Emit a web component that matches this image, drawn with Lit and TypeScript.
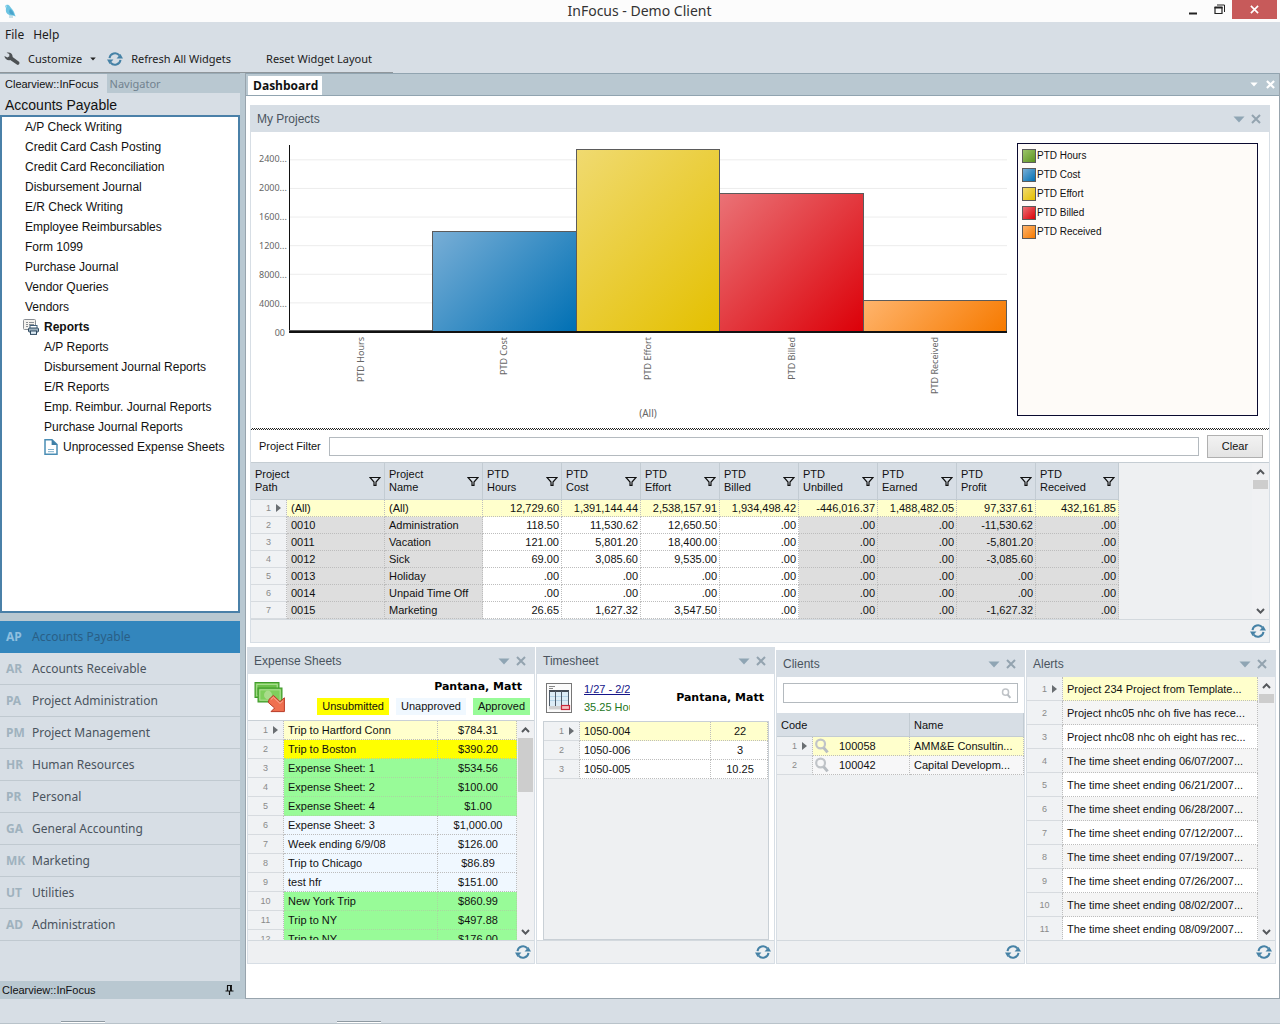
import { LitElement, html, css, svg, nothing } from "lit";
import { customElement, property } from "lit/decorators.js";
import { classMap } from "lit/directives/class-map.js";
import { styleMap } from "lit/directives/style-map.js";

/* ---------- icons ---------- */

const refreshIcon = (size = 16) => html`<svg class="icon" width=${size} height=${size} viewBox="0 0 16 16" fill="none" aria-hidden="true">
  <path d="M2.5 7.2A5.6 5.6 0 0 1 12.4 4.4" stroke="#4682a6" stroke-width="2"/>
  <path d="M13.5 8.8A5.6 5.6 0 0 1 3.6 11.6" stroke="#4682a6" stroke-width="2"/>
  <path d="M9.6 7.4H16L13.4 3Z" fill="#4682a6"/>
  <path d="M6.4 8.6H0L2.6 13Z" fill="#4682a6"/>
</svg>`;

const birdIcon = html`<svg class="icon" width="16" height="18" viewBox="0 0 16 18" aria-hidden="true">
  <path d="M3 4.4C3.6 2.4 6.8 2 8 4.4C9.4 6.4 11.6 8 12.2 10.6L13.6 14.4L11 13.6C7.6 13.6 4.6 12.2 4 9.6C3.6 7.8 4.2 6.6 3.8 5.6Z" fill="#6cc4e2"/>
  <path d="M8 7C10.4 8.6 11.8 11 12 13.2L8.8 12.2C7 11 6.8 9 8 7Z" fill="#4aa4cc"/>
  <path d="M3 4.4L5 3.2L4.6 5.8Z" fill="#a8e0f2"/>
  <path d="M8 13V16M10 13.4V16" stroke="#7fb8cc" stroke-width="0.8"/>
</svg>`;

const wrenchIcon = html`<svg class="icon" width="16" height="16" viewBox="0 0 16 16" aria-hidden="true">
  <path d="M0.4 5L3.4 6.4L5.4 5.2L5.2 3L2.6 1.8C5.4 0.6 8.4 2.2 8.6 5.2L8.6 6L15 10.8C16.2 12 14.8 14.6 13.2 13.8L6.2 9C3.6 9.8 0.8 8 0.4 5Z" fill="#4d5154"/>
</svg>`;

const reportsIcon = html`<svg class="icon" width="16" height="16" viewBox="0 0 16 16" aria-hidden="true">
  <rect x="0.5" y="0.5" width="12" height="10" rx="1" fill="#f4f2ee" stroke="#8b8f94"/>
  <path d="M3 3.5H5M6 3.5H11M3 5.5H5M6 5.5H11M3 7.5H5" stroke="#8b8f94"/>
  <rect x="7" y="6.5" width="7" height="3" fill="#fff" stroke="#3f5f7a"/>
  <rect x="5.5" y="9" width="10" height="4" rx="1" fill="#9db0be" stroke="#2f4a60"/>
  <rect x="7.5" y="12" width="6" height="3.4" fill="#dceaf4" stroke="#2f4a60"/>
</svg>`;

const docIcon = html`<svg class="icon" width="14" height="16" viewBox="0 0 14 16" aria-hidden="true">
  <path d="M1 0.8H8L13 5.6V15.2H1Z" fill="#fff" stroke="#4a8db4" stroke-width="1.5"/>
  <path d="M7.6 0.6V6H13.2Z" fill="#3f7fa6"/>
  <path d="M4 10.5H10M4 12.7H10" stroke="#7fb0cc" stroke-width="1"/>
</svg>`;

const pinIcon = html`<svg class="icon" width="9" height="10" viewBox="0 0 9 10" aria-hidden="true">
  <path d="M2 0.5H7M2.5 0.5V5.5M6 0V6M0.5 6H8.5M4.5 6V10" fill="none" stroke="#111" stroke-width="1.2"/>
  <path d="M5 0.5H6.8V6H5Z" fill="#111"/>
</svg>`;

const funnelIcon = html`<svg class="icon" width="12" height="11" viewBox="0 0 12 11" aria-hidden="true">
  <path d="M1 1.5H11L7 6V9.4H5V6Z" fill="none" stroke="#111" stroke-width="1.2"/>
</svg>`;

const searchIcon = (size: number) => html`<svg class="icon" width=${size} height=${size} viewBox="0 0 16 16" fill="none" aria-hidden="true">
  <circle cx="6.6" cy="6" r="4.4" stroke="#c0c4c8" stroke-width="2.2"/>
  <path d="M9.6 9.6L13.6 14.4" stroke="#b8bdc2" stroke-width="3"/>
</svg>`;

const moneyIcon = html`<svg class="icon" width="32" height="32" viewBox="0 0 32 32" aria-hidden="true">
  <rect x="1" y="1.5" width="24" height="15" fill="#6cc04a" stroke="#3f9a2a"/>
  <rect x="2.8" y="3.3" width="20.4" height="11.4" fill="none" stroke="#b5e49b"/>
  <rect x="4" y="7" width="24" height="14" fill="#63b944" stroke="#3f9a2a"/>
  <rect x="5.8" y="8.8" width="20.4" height="10.4" fill="#7fcf5c" stroke="#b5e49b"/>
  <ellipse cx="14" cy="14" rx="4" ry="4.4" fill="#a8dc8a"/>
  <path d="M15 18.4L19.4 14.4L26 20.6L30.4 16.8V30.6H17L20.6 27L14.4 21.6Z" fill="#ef7050" stroke="#b83a26"/>
  <path d="M16.8 18.6L19.4 16.2L26 22.4L28.8 20" fill="none" stroke="#f9b09a"/>
</svg>`;

const timesheetIcon = html`<svg class="icon" width="26" height="30" viewBox="0 0 26 30" aria-hidden="true">
  <rect x="0.5" y="0.5" width="25" height="29" fill="#fbfbfb" stroke="#777"/>
  <path d="M3 3.5H9M3 5.5H7" stroke="#888"/>
  <rect x="3" y="7" width="20" height="2" fill="#444b54"/>
  <rect x="3" y="9" width="20" height="14" fill="#dcecf6"/>
  <path d="M3 13.5H23M3 17.5H23" stroke="#b5d4e8"/>
  <path d="M3.5 8V26M9.5 8V26M15.5 8V26M22.5 8V24" stroke="#4f5b68"/>
  <rect x="3" y="23" width="12" height="3.4" fill="#d0d0d0"/>
  <rect x="15.5" y="22.5" width="8" height="4" fill="#f4c2c2" stroke="#c8283c" stroke-width="1.2"/>
</svg>`;

const downIcon = (color: string, w = 12, h = 7) => html`<svg class="icon" width=${w} height=${h} viewBox="0 0 12 7" aria-hidden="true"><path d="M0.5 0.5H11.5L6 6.5Z" fill=${color}/></svg>`;
const crossIcon = (color: string, size = 10, sw = 2) => html`<svg class="icon" width=${size} height=${size} viewBox="0 0 10 10" aria-hidden="true"><path d="M1 1L9 9M9 1L1 9" stroke=${color} stroke-width=${sw}/></svg>`;
const marker = html`<svg class="marker" width="5" height="8" viewBox="0 0 5 8" aria-label="Current row"><path d="M0 0L5 4L0 8Z" fill="#6a6e72"/></svg>`;
const chevron = (up: boolean) => html`<svg class="icon" width="9" height="6" viewBox="0 0 9 6" fill="none" aria-hidden="true">
  ${up ? svg`<path d="M1 5L4.5 1.4L8 5" stroke="#55585c" stroke-width="2"/>` : svg`<path d="M1 1L4.5 4.6L8 1" stroke="#55585c" stroke-width="2"/>`}
</svg>`;

/* ---------- data ---------- */

const treeItems = ["A/P Check Writing", "Credit Card Cash Posting", "Credit Card Reconciliation", "Disbursement Journal", "E/R Check Writing", "Employee Reimbursables", "Form 1099", "Purchase Journal", "Vendor Queries", "Vendors"];
const reportItems = ["A/P Reports", "Disbursement Journal Reports", "E/R Reports", "Emp. Reimbur. Journal Reports", "Purchase Journal Reports"];
const modules = [["AP", "Accounts Payable"], ["AR", "Accounts Receivable"], ["PA", "Project Administration"], ["PM", "Project Management"], ["HR", "Human Resources"], ["PR", "Personal"], ["GA", "General Accounting"], ["MK", "Marketing"], ["UT", "Utilities"], ["AD", "Administration"]];

const axisMax = 2600000;
const axisTicks = ["2400...", "2000...", "1600...", "1200...", "8000...", "4000...", "00"];
const series = [
  { name: "PTD Hours", value: 12729.6, tone: "green" },
  { name: "PTD Cost", value: 1391144.44, tone: "blue" },
  { name: "PTD Effort", value: 2538157.91, tone: "yellow" },
  { name: "PTD Billed", value: 1934498.42, tone: "red" },
  { name: "PTD Received", value: 432161.85, tone: "orange" },
];

const projectColumns = ["Name", "Hours", "Cost", "Effort", "Billed", "Unbilled", "Earned", "Profit", "Received"];
const projects = [
  ["(All)", "(All)", "12,729.60", "1,391,144.44", "2,538,157.91", "1,934,498.42", "-446,016.37", "1,488,482.05", "97,337.61", "432,161.85"],
  ["0010", "Administration", "118.50", "11,530.62", "12,650.50", ".00", ".00", ".00", "-11,530.62", ".00"],
  ["0011", "Vacation", "121.00", "5,801.20", "18,400.00", ".00", ".00", ".00", "-5,801.20", ".00"],
  ["0012", "Sick", "69.00", "3,085.60", "9,535.00", ".00", ".00", ".00", "-3,085.60", ".00"],
  ["0013", "Holiday", ".00", ".00", ".00", ".00", ".00", ".00", ".00", ".00"],
  ["0014", "Unpaid Time Off", ".00", ".00", ".00", ".00", ".00", ".00", ".00", ".00"],
  ["0015", "Marketing", "26.65", "1,627.32", "3,547.50", ".00", ".00", ".00", "-1,627.32", ".00"],
];

const expenses = [
  ["Trip to Hartford Conn", "$784.31", "current"],
  ["Trip to Boston", "$390.20", "unsubmitted"],
  ["Expense Sheet: 1", "$534.56", "approved"],
  ["Expense Sheet: 2", "$100.00", "approved"],
  ["Expense Sheet: 4", "$1.00", "approved"],
  ["Expense Sheet: 3", "$1,000.00", "unapproved"],
  ["Week ending 6/9/08", "$126.00", "unapproved"],
  ["Trip to Chicago", "$86.89", "unapproved"],
  ["test hfr", "$151.00", "unapproved"],
  ["New York Trip", "$860.99", "approved"],
  ["Trip to NY", "$497.88", "approved"],
  ["Trip to NY", "$176.00", "approved"],
];
const timesheet = [["1050-004", "22"], ["1050-006", "3"], ["1050-005", "10.25"]];
const clients = [["100058", "AMM&E Consultin..."], ["100042", "Capital Developm..."]];
const alerts = [
  "Project 234 Project from Template...",
  "Project nhc05 nhc oh five has rece...",
  "Project nhc08 nhc oh eight has rec...",
  ...["06/07", "06/21", "06/28", "07/12", "07/19", "07/26", "08/02", "08/09"].map((d) => `The time sheet ending ${d}/2007...`),
];

/* ---------- shared styles ---------- */

const base = css`
  * { box-sizing: border-box; }
  button { font: inherit; color: inherit; background: none; border: 0; padding: 0; margin: 0; display: inline-flex; align-items: center; }
  a { color: inherit; text-decoration: none; }
  .icon { display: block; flex: none; }
`;

/* A framed dashboard panel: title bar, content, and a footer with refresh. */
@customElement("dash-widget")
export class DashWidget extends LitElement {
  @property() heading = "";

  static styles = [base, css`
    :host { display: flex; flex-direction: column; min-width: 0; min-height: 0; border: 1px solid #d7dee5; background: #fff; }
    .head { height: 26px; flex: none; display: flex; align-items: center; gap: 6px; padding: 0 8px 0 6px; background: #d7dee5; color: #4a545e; font-size: 12px; }
    .title { flex: 1; margin: 0; font: inherit; }
    .body { flex: 1; min-height: 0; display: flex; flex-direction: column; }
    .foot { height: 23px; flex: none; display: flex; justify-content: flex-end; align-items: center; padding-right: 3px; background: #eef0f2; border-top: 1px solid #d3d9de; }
  `];

  render() {
    return html`
      <header class="head">
        <h2 class="title">${this.heading}</h2>
        <button aria-label="${this.heading} options">${downIcon("#8fa5b4")}</button>
        <button aria-label="Close ${this.heading}">${crossIcon("#93a3af", 10, 2)}</button>
      </header>
      <div class="body"><slot></slot></div>
      <footer class="foot"><button aria-label="Refresh ${this.heading}">${refreshIcon(16)}</button></footer>`;
  }
}

/* Vertical scroll bar with arrows and a thumb sized in percent of the track. */
@customElement("scroll-rail")
export class ScrollRail extends LitElement {
  @property({ type: Number }) thumb = 10;

  static styles = [base, css`
    :host { display: flex; flex-direction: column; width: 17px; flex: none; background: #f0f1f3; }
    button { height: 17px; justify-content: center; }
    .track { flex: 1; padding: 0 1px; }
    .thumb { background: #cdcdcd; }
  `];

  render() {
    return html`
      <button aria-label="Scroll up">${chevron(true)}</button>
      <div class="track"><div class="thumb" style=${styleMap({ height: `${this.thumb}%` })}></div></div>
      <button aria-label="Scroll down">${chevron(false)}</button>`;
  }
}

@customElement("app-root")
export class AppRoot extends LitElement {
  static styles = [base, css`
    :host { display: flex; flex-direction: column; height: 100vh; overflow: hidden; background: #d7dee5; color: #111; font-family: "Liberation Sans", Arial, sans-serif; font-size: 12px; }

    .titlebar { height: 22px; flex: none; display: grid; grid-template-columns: 1fr auto 1fr; align-items: center; background: #fcfcfc; padding: 0 3px 0 2px; }
    .app-title { margin: 0; font: 14px/20px "Noto Sans", "Open Sans", sans-serif; color: #333; }
    .win { justify-self: end; align-self: start; display: flex; }
    .win button { height: 19px; width: 26px; justify-content: center; }
    .win .close { width: 45px; background: #c75a5a; }

    .menubar, .toolbar { flex: none; display: flex; align-items: center; font: 12px/16px "Noto Sans", "Open Sans", sans-serif; color: #1c1c1c; }
    .menubar { height: 25px; gap: 9px; padding: 0 5px; }
    .toolbar { height: 26px; width: 393px; max-width: 100%; padding: 0 0 1px 4px; border-bottom: 1px solid #8f969b; font-size: 11px; }
    .tool { gap: 8px; white-space: nowrap; }
    .tool + .tool { margin-left: 11px; }
    .toolbar .tool.reset { margin-left: 35px; }

    .main { flex: 1; min-height: 0; display: flex; }

    .sidebar { width: 245px; flex: none; display: flex; flex-direction: column; background: #b9c8d1; padding-right: 5px; }
    .tabs { height: 20px; flex: none; display: flex; font-size: 11px; border-top: 1px solid #9aabb6; }
    .tabs button { padding: 0 8px 0 5px; }
    .tabs .on { background: #d7dee5; }
    .tabs .off { color: #71828f; font-family: "Noto Sans", sans-serif; padding: 0 3px; }
    .side-title { height: 22px; flex: none; margin: 0; padding: 3px 5px 0; font-size: 14px; line-height: 18px; font-weight: 400; background: #d7dee5; }
    .tree { flex: 1; min-height: 0; overflow: hidden; background: #fff; border: 2px solid #4a80a8; margin-bottom: 8px; }
    .tree ul { list-style: none; margin: 0; padding: 0 0 0 23px; }
    .tree ul ul { padding: 0 0 0 19px; }
    .tree li { line-height: 20px; white-space: nowrap; }
    .tree .group { display: flex; align-items: center; gap: 5px; font-weight: 700; height: 20px; margin-left: -2px; }
    .tree .leaf { display: flex; align-items: center; gap: 5px; height: 20px; }
    .modules { flex: none; background: #d7dee5; padding-bottom: 40px; display: flex; flex-direction: column; font: 12px "Noto Sans", "Open Sans", sans-serif; }
    .module { height: 32px; padding-left: 6px; color: #4a545e; border-bottom: 1px solid #c0c9d0; text-align: left; }
    .module .code { width: 26px; font-weight: 700; color: #9fb2be; }
    .module.on { background: #3386bd; color: #2a5f86; border-color: #3386bd; }
    .module.on .code { color: #8fbfdf; }
    .side-foot { height: 18px; flex: none; display: flex; align-items: center; justify-content: space-between; padding: 0 6px 0 2px; font-size: 11px; }

    .content { flex: 1; min-width: 0; display: flex; flex-direction: column; background: #fff; border: solid #98a4ad; border-width: 0 1px 1px; }
    .doc-tabs { height: 23px; flex: none; display: flex; align-items: flex-end; background: #b9c8d1; border: solid #91a4b0; border-width: 1px 0; padding-left: 2px; }
    .doc-tab { height: 19px; background: #fff; padding: 0 4px 0 5px; font: bold 12px "Open Sans", "Noto Sans", sans-serif; color: #111; }
    .doc-tools { margin-left: auto; align-self: center; display: flex; align-items: center; gap: 8px; padding-right: 4px; }
    .dashboard { flex: 1; min-height: 0; display: flex; flex-direction: column; gap: 4px; padding: 9px 3px 34px 1px; }
    .projects { flex: none; margin: 0 6px 0 3px; }

    .chart { display: flex; gap: 10px; padding: 11px 11px 8px 8px; }
    .plot-wrap { flex: 1; display: grid; grid-template-columns: 26px 1fr; column-gap: 4px; grid-template-rows: 190px auto auto; font-family: "Noto Sans", sans-serif; font-size: 9px; color: #666; }
    .ticks { display: flex; flex-direction: column; justify-content: space-between; padding-top: 10px; margin-bottom: -6px; text-align: right; line-height: 12px; }
    .plot { display: flex; align-items: flex-end; margin-top: 2px; border: solid #111; border-width: 0 0 2px 1px; background: linear-gradient(#ececec, #ececec 1px, transparent 1px) left bottom / 100% calc(100% * 4 / 26); }
    .bar { flex: 1; border: 1px solid #5b5b5b; border-bottom: 0; margin-left: -1px; }
    .cats { grid-column: 2; display: flex; height: 70px; padding-top: 4px; font-size: 9px; }
    .cat { flex: 1; display: flex; justify-content: center; }
    .cat span { writing-mode: vertical-rl; transform: rotate(180deg); align-self: flex-start; line-height: 14px; }
    .group-label { grid-column: 2; text-align: center; font-size: 10px; line-height: 14px; padding-top: 3px; }
    .legend { width: 241px; flex: none; border: 1px solid #0a0a30; background: #fefbf8; margin: 0 0 4px; padding: 2px 4px; list-style: none; font-size: 10px; }
    .legend li { height: 19px; display: flex; align-items: center; gap: 1px; }
    .swatch { width: 14px; height: 14px; border: 1px solid #5b5b5b; }
    .green { background: linear-gradient(135deg, #9cc46a, #5c9420); }
    .blue { background: linear-gradient(135deg, #78aed6, #0070b4); }
    .yellow { background: linear-gradient(135deg, #f0da70, #e4c000); }
    .red { background: linear-gradient(135deg, #ea7276, #dc0008); }
    .orange { background: linear-gradient(135deg, #ffb46c, #f67a00); }

    .divider { height: 2px; background: repeating-conic-gradient(#222 0 25%, #fff 0 50%) 0 0 / 2px 2px; }
    .filter { height: 32px; display: flex; align-items: center; gap: 8px; padding: 0 6px 0 8px; font-size: 11px; }
    .filter .box { flex: 1; height: 19px; }
    .box { border: 1px solid #b4babf; background: #fff; font: inherit; padding: 0 4px; min-width: 0; }
    .clear { width: 56px; height: 23px; justify-content: center; border: 1px solid #b0b0b0; background: linear-gradient(#f2f2f2, #e4e4e4); font-size: 11px; }

    .grid-wrap { flex: 1; min-height: 0; display: flex; background: #eef0f2; overflow: hidden; }
    .grid-scroll { flex: 1; min-width: 0; overflow: hidden; }
    .projects .grid-wrap { border-top: 1px solid #c5cdd3; }
    table { border-spacing: 0; table-layout: fixed; width: 100%; font-size: 11px; }
    td, th { padding: 0; font-weight: 400; text-align: left; white-space: nowrap; overflow: hidden; }
    td { border: dotted #bdbdbd; border-width: 0 1px 1px 0; height: 19px; padding: 0 2px 0 4px; background: #fff; }
    tbody th { background: #f0f2f4; color: #8a8a8a; font-size: 9px; border-bottom: 1px solid #d7dbdf; border-right: 1px dotted #bdbdbd; text-align: center; }
    thead th { background: #d7dee5; border-right: 1px solid #c3ccd3; border-bottom: 1px solid #c3ccd3; padding: 0 3px 0 4px; }
    .rn { display: flex; align-items: center; justify-content: center; height: 100%; gap: 5px; }
    .rn.sel { padding-left: 10px; }
    .marker { display: block; }
    .current td { background: #ffffcc; }
    .num { text-align: right; }
    .mid { text-align: center; }

    .project-table { width: 868px; }
    .project-table td { height: 17px; }
    .project-table thead th { height: 37px; line-height: 13px; }
    .project-table .locked { background: #dedede; }
    .project-table .current .locked { background: #ffffcc; }
    .hd { display: flex; align-items: center; justify-content: space-between; }
    .c-num { width: 36px; } .c-text { width: 98px; } .c-val { width: 79px; } .c-wide { width: 83px; }
    .c-amt { width: 79px; } .c-hrs { width: 57px; } .c-code { width: 97px; }

    .row { flex: 1; min-height: 0; display: grid; grid-template-columns: 288fr 239fr 249fr 250fr; column-gap: 1px; }
    .lower { margin-top: 3px; }

    .exp-head { height: 46px; flex: none; display: flex; align-items: center; gap: 8px; padding: 0 4px 0 6px; }
    .exp-info { flex: 1; display: flex; flex-direction: column; align-items: flex-end; gap: 3px; }
    .person { font: bold 11px/16px "DejaVu Sans", Verdana, sans-serif; color: #000; white-space: nowrap; }
    .exp-info .person { padding-right: 8px; }
    .tags { display: flex; gap: 7px; font-size: 11px; }
    .tag { line-height: 17px; padding: 0 5px; }
    .unsubmitted, .unsubmitted td { background: #ffff00; }
    .unapproved, .unapproved td { background: #f0f8ff; }
    .approved, .approved td { background: #98fb98; }
    .approved td, .unsubmitted td { border-color: #a9d8a0; }
    .exp-grid { border-top: 1px solid #c9d0d6; }

    .ts-head { height: 47px; flex: none; display: flex; align-items: center; gap: 12px; padding: 0 10px 0 9px; }
    .ts-info { width: 46px; overflow: hidden; white-space: nowrap; line-height: 18px; display: flex; flex-direction: column; align-items: flex-start; font-size: 11px; }
    .ts-info a { color: #15158a; text-decoration: underline; }
    .hours { color: #1d761d; }
    .ts-head .person { margin-left: auto; }
    .ts-grid { margin: 0 5px 0 6px; border: 1px solid #c9d0d6; }

    .search { height: 36px; flex: none; display: flex; padding: 6px 6px 10px; }
    .search-box { flex: 1; display: flex; align-items: center; padding: 0 5px; }
    .search-box input { flex: 1; min-width: 0; border: 0; outline: 0; background: none; font: inherit; }
    .client-grid thead th { height: 24px; }
    .client-grid td { background: #f7f7f8; }
    .client-grid .current td { background: #ffffcc; }
    .code-cell { display: flex; align-items: center; gap: 9px; }
    .client-grid .code-td { padding-left: 1px; }
    .alert-grid td { height: 24px; }
    .alert-grid tr:nth-child(even) td { background: #f5f5f5; }

    .status { height: 25px; flex: none; display: flex; align-items: flex-end; padding-left: 61px; gap: 232px; border-bottom: 1px solid #b9c3ca; }
    .stub { width: 44px; height: 2px; background: #fff; border-top: 1px solid #8f9aa2; }
  `];

  private rowHead(i: number) {
    return html`<th scope="row"><div class=${classMap({ rn: true, sel: i === 0 })}>${i + 1}${i === 0 ? marker : nothing}</div></th>`;
  }

  private sidebar() {
    return html`<aside class="sidebar">
      <div class="tabs"><button class="on">Clearview::InFocus</button><button class="off">Navigator</button></div>
      <h2 class="side-title">Accounts Payable</h2>
      <nav class="tree"><ul>
        ${treeItems.map((t) => html`<li><a href="#">${t}</a></li>`)}
        <li><div class="group">${reportsIcon}<span>Reports</span></div>
          <ul>${reportItems.map((t) => html`<li><a href="#">${t}</a></li>`)}
            <li><a class="leaf" href="#">${docIcon}<span>Unprocessed Expense Sheets</span></a></li>
          </ul></li>
      </ul></nav>
      <nav class="modules">
        ${modules.map(([code, name], i) => html`<button class=${classMap({ module: true, on: i === 0 })}><span class="code">${code}</span><span>${name}</span></button>`)}
      </nav>
      <div class="side-foot"><span>Clearview::InFocus</span><button aria-label="Pin panel">${pinIcon}</button></div>
    </aside>`;
  }

  private chart() {
    return html`<div class="chart">
      <div class="plot-wrap">
        <div class="ticks">${axisTicks.map((t) => html`<span>${t}</span>`)}</div>
        <div class="plot">${series.map((s) => html`<div class="bar ${s.tone}" style=${styleMap({ height: `${(s.value / axisMax) * 100}%` })}></div>`)}</div>
        <div class="cats">${series.map((s) => html`<div class="cat"><span>${s.name}</span></div>`)}</div>
        <div class="group-label">(All)</div>
      </div>
      <ul class="legend">${series.map((s) => html`<li><span class="swatch ${s.tone}"></span>${s.name}</li>`)}</ul>
    </div>`;
  }

  private projectGrid() {
    return html`<div class="grid-wrap"><div class="grid-scroll"><table class="project-table">
      <colgroup><col class="c-num"><col class="c-text"><col class="c-text">
        ${[0, 1, 2, 3, 4, 5, 6].map(() => html`<col class="c-val">`)}<col class="c-wide"></colgroup>
      <thead><tr>
        <th colspan="2" scope="col"><div class="hd"><span>Project<br>Path</span>${funnelIcon}</div></th>
        ${projectColumns.map((c, i) => html`<th scope="col"><div class="hd"><span>${i === 0 ? "Project" : "PTD"}<br>${c}</span>${funnelIcon}</div></th>`)}
      </tr></thead>
      <tbody>${projects.map((r, i) => html`<tr class=${i === 0 ? "current" : ""}>${this.rowHead(i)}
        ${r.map((v, c) => html`<td class=${classMap({ num: c > 1, locked: c < 2 || c > 5 })}>${v}</td>`)}</tr>`)}
      </tbody></table></div><scroll-rail thumb="7"></scroll-rail></div>`;
  }

  render() {
    return html`
      <header class="titlebar">
        ${birdIcon}
        <h1 class="app-title">InFocus - Demo Client</h1>
        <div class="win">
          <button aria-label="Minimize"><svg width="10" height="10" viewBox="0 0 10 10"><path d="M1 8.5H9" stroke="#222" stroke-width="2"/></svg></button>
          <button aria-label="Restore"><svg width="11" height="11" viewBox="0 0 11 11" fill="none" stroke="#222"><path d="M3 1H10.5V8"/><path d="M1 3.5H8V9.5H1Z" stroke-width="1.2"/><path d="M0.5 3.5H8.5" stroke-width="2"/></svg></button>
          <button class="close" aria-label="Close">${crossIcon("#fff", 9, 1.8)}</button>
        </div>
      </header>
      <nav class="menubar"><button>File</button><button>Help</button></nav>
      <div class="toolbar">
        <button class="tool">${wrenchIcon}<span>Customize</span>${downIcon("#222", 6, 4)}</button>
        <button class="tool">${refreshIcon(16)}<span>Refresh All Widgets</span></button>
        <button class="tool reset">Reset Widget Layout</button>
      </div>
      <div class="main">
        ${this.sidebar()}
        <main class="content">
          <div class="doc-tabs"><button class="doc-tab">Dashboard</button>
            <div class="doc-tools"><button aria-label="Tab list">${downIcon("#fff", 8, 5)}</button><button aria-label="Close tab">${crossIcon("#fff", 9, 2.4)}</button></div></div>
          <div class="dashboard">
            <dash-widget class="projects" heading="My Projects">
              ${this.chart()}
              <div class="divider"></div>
              <form class="filter" @submit=${(e: Event) => e.preventDefault()}>
                <label for="pf">Project Filter</label><input class="box" id="pf" type="text"><button class="clear" type="reset">Clear</button>
              </form>
              ${this.projectGrid()}
            </dash-widget>
            <div class="row">
              <dash-widget heading="Expense Sheets">
                <div class="exp-head">${moneyIcon}
                  <div class="exp-info"><span class="person">Pantana, Matt</span>
                    <div class="tags"><span class="tag unsubmitted">Unsubmitted</span><span class="tag unapproved">Unapproved</span><span class="tag approved">Approved</span></div></div>
                </div>
                <div class="grid-wrap exp-grid"><div class="grid-scroll"><table>
                  <colgroup><col class="c-num"><col><col class="c-amt"></colgroup>
                  <tbody>${expenses.map(([n, a, s], i) => html`<tr class=${s}>${this.rowHead(i)}<td>${n}</td><td class="mid">${a}</td></tr>`)}</tbody>
                </table></div><scroll-rail thumb="29"></scroll-rail></div>
              </dash-widget>
              <dash-widget heading="Timesheet">
                <div class="ts-head">${timesheetIcon}
                  <div class="ts-info"><a href="#">1/27 - 2/2</a><span class="hours">35.25 Hours</span></div>
                  <span class="person">Pantana, Matt</span></div>
                <div class="grid-wrap ts-grid"><div class="grid-scroll"><table>
                  <colgroup><col class="c-num"><col><col class="c-hrs"></colgroup>
                  <tbody>${timesheet.map(([n, h], i) => html`<tr class=${i === 0 ? "current" : ""}>${this.rowHead(i)}<td>${n}</td><td class="mid">${h}</td></tr>`)}</tbody>
                </table></div></div>
              </dash-widget>
              <dash-widget class="lower" heading="Clients">
                <div class="search"><label class="box search-box"><input type="text" aria-label="Search clients">${searchIcon(11)}</label></div>
                <div class="grid-wrap client-grid"><div class="grid-scroll"><table>
                  <colgroup><col class="c-num"><col class="c-code"><col></colgroup>
                  <thead><tr><th colspan="2" scope="col">Code</th><th scope="col">Name</th></tr></thead>
                  <tbody>${clients.map(([c, n], i) => html`<tr class=${i === 0 ? "current" : ""}>${this.rowHead(i)}
                    <td class="code-td"><div class="code-cell">${searchIcon(16)}${c}</div></td><td>${n}</td></tr>`)}</tbody>
                </table></div></div>
              </dash-widget>
              <dash-widget class="lower" heading="Alerts">
                <div class="grid-wrap alert-grid"><div class="grid-scroll"><table>
                  <colgroup><col class="c-num"><col></colgroup>
                  <tbody>${alerts.map((a, i) => html`<tr class=${i === 0 ? "current" : ""}>${this.rowHead(i)}<td>${a}</td></tr>`)}</tbody>
                </table></div><scroll-rail thumb="4"></scroll-rail></div>
              </dash-widget>
            </div>
          </div>
        </main>
      </div>
      <footer class="status"><span class="stub"></span><span class="stub"></span></footer>`;
  }
}
